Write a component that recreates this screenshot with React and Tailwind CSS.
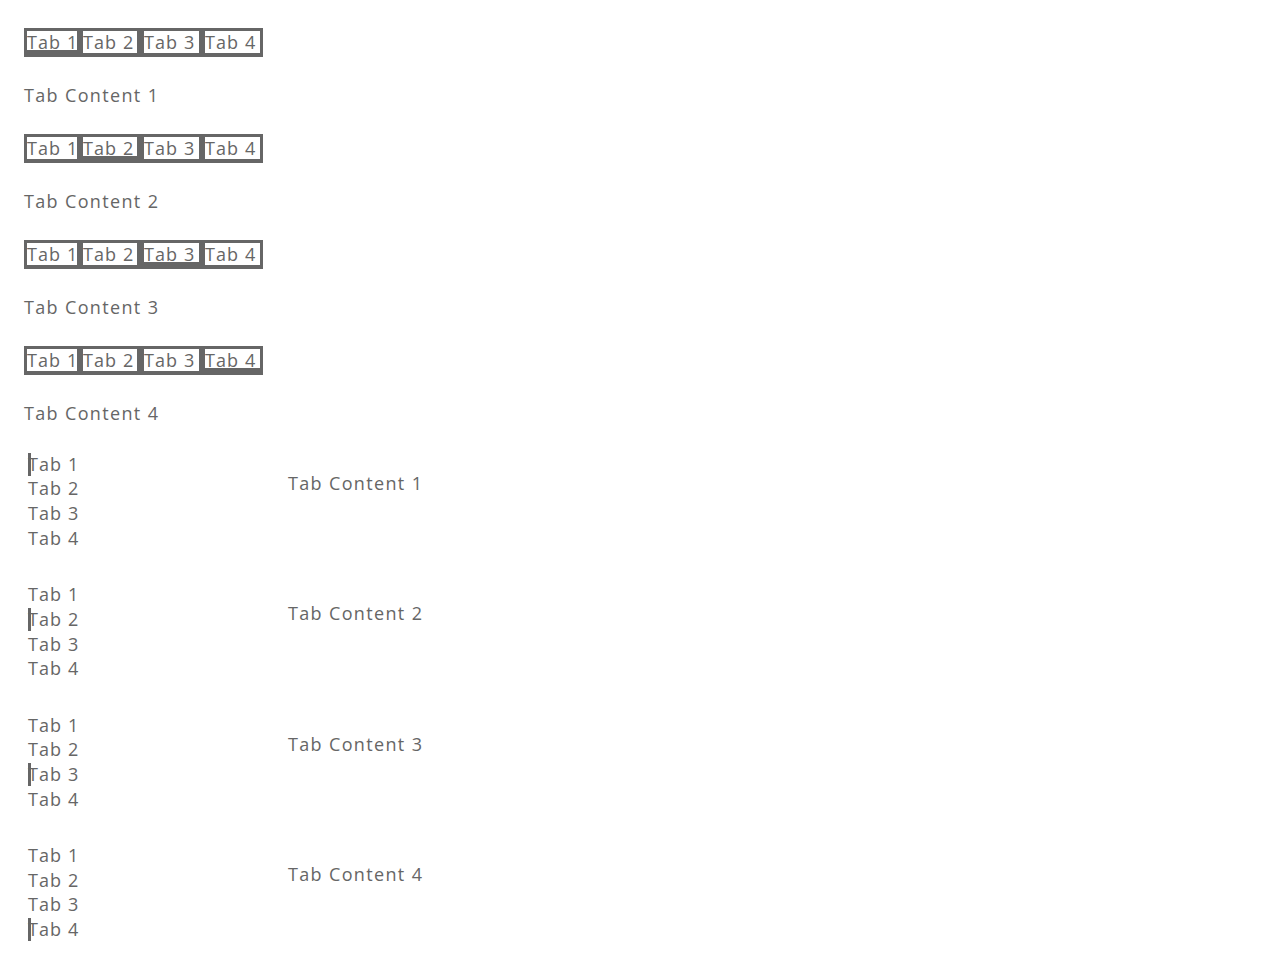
import React from "react";

const font = { fontFamily: '"Open Sans", "Liberation Sans", sans-serif' };

const widths = ["w-[50px]", "w-[54px]", "w-[55px]", "w-[55px]"];
const gaps = ["", "ml-[6px]", "ml-[7px]", "ml-[6px]"];

function HTabs({ active }) {
  return (
    <div className="flex flex-col">
      <div className="flex w-[239px] h-[29px] bg-[#666] pl-[3px] pt-[3px]">
        {[0, 1, 2, 3].map((i) => (
          <div
            key={i}
            className={`${widths[i]} ${gaps[i]} ${
              i === active ? "h-[19px]" : "h-[22px]"
            } bg-white flex items-start overflow-visible`}
          >
            <span className="text-[18px] leading-[22px] tracking-[1.1px] whitespace-nowrap text-[#666]">
              Tab {i + 1}
            </span>
          </div>
        ))}
      </div>
      <p className="mt-[25.7px] mb-[26.6px] text-[18px] leading-[24.67px] tracking-[1.35px] text-[#666]">
        Tab Content {active + 1}
      </p>
    </div>
  );
}

function VTabs({ active }) {
  return (
    <div className="flex">
      <div className="w-[264px] flex flex-col">
        {[0, 1, 2, 3].map((i) => (
          <div key={i} className="relative h-[24.67px] pl-[4px]">
            {i === active && (
              <span className="absolute left-[4px] top-[1px] w-[3px] h-[23px] bg-[#666]" />
            )}
            <span className="text-[18px] leading-[24.67px] tracking-[1.1px] text-[#666] whitespace-nowrap">
              Tab {i + 1}
            </span>
          </div>
        ))}
      </div>
      <p className="mt-[19px] text-[18px] leading-[24.67px] tracking-[1.35px] text-[#666]">
        Tab Content {active + 1}
      </p>
    </div>
  );
}

export default function App() {
  return (
    <div className="min-h-[970px] bg-white pl-[24px] pt-[28px]" style={font}>
      <div className="flex flex-col">
        {[0, 1, 2, 3].map((i) => (
          <HTabs key={i} active={i} />
        ))}
      </div>
      <div className="flex flex-col gap-[31.8px]">
        {[0, 1, 2, 3].map((i) => (
          <VTabs key={i} active={i} />
        ))}
      </div>
    </div>
  );
}
